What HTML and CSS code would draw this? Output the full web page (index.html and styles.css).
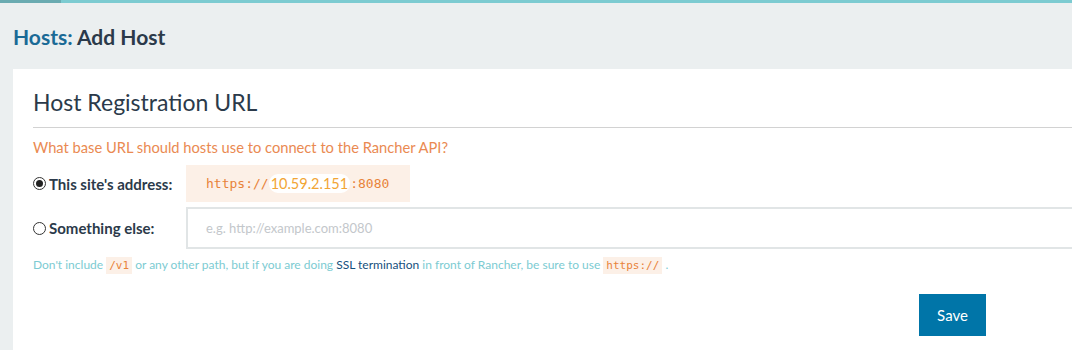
FILE: index.html
```html
<!DOCTYPE html>
<html lang="en">
<head>
    <meta charset="UTF-8">
    <meta name="viewport" content="width=device-width, initial-scale=1.0">
    <title>Hosts: Add Host</title>
    <link rel="stylesheet" href="styles.css">
</head>
<body>
    <div class="top-bar"><span class="top-bar-active"></span></div>

    <div class="page-header">
        <h1><span class="crumb">Hosts:</span> Add Host</h1>
    </div>

    <div class="card">
        <h2>Host Registration URL</h2>
        <hr>

        <p class="question">What base URL should hosts use to connect to the Rancher API?</p>

        <div class="option-row">
            <label class="option">
                <span class="radio checked"></span>
                This site's address:
            </label>
            <div class="site-address">https://<span class="ip">10.59.2.151</span>:8080</div>
        </div>

        <div class="option-row">
            <label class="option">
                <span class="radio"></span>
                Something else:
            </label>
            <input class="url-input" type="text" placeholder="e.g. http://example.com:8080">
        </div>

        <p class="help">Don't include <code>/v1</code> or any other path, but if you are doing <a href="#">SSL termination</a> in front of Rancher, be sure to use <code>https://</code> .</p>

        <div class="footer">
            <button class="save">Save</button>
        </div>
    </div>
</body>
</html>
```

FILE: styles.css
```css
:root {
    --page-bg: #ebeff0;
    --bar-color: #7ccbd1;
    --bar-active: #6aabb1;
    --title-color: #2b3a4a;
    --crumb-color: #1a6a96;
    --orange: #ea8a52;
    --code-bg: #fcf0e7;
    --code-color: #e8833a;
    --help-color: #7ccbd2;
    --link-color: #154f7d;
    --save-color: #0075a8;
}

html, body {
    overflow: hidden;
}

body {
    margin: 0;
    width: 1905px;
    background-color: var(--page-bg);
    font-family: Lato, "Open Sans", sans-serif;
    color: var(--title-color);
}

.top-bar {
    height: 3px;
    background-color: var(--bar-color);
}

.top-bar-active {
    display: block;
    width: 61px;
    height: 3px;
    background-color: var(--bar-active);
}

.page-header {
    height: 66px;
    box-sizing: border-box;
    padding: 21px 13px 0;
}

h1 {
    margin: 0;
    font-size: 21px;
    line-height: 25px;
    font-weight: bold;
    color: var(--title-color);
}

.crumb {
    color: var(--crumb-color);
}

.card {
    margin: 0 13px;
    background-color: white;
    padding: 19px 20px 20px;
    min-height: 300px;
}

h2 {
    margin: 0;
    font-size: 23px;
    line-height: 28px;
    font-weight: normal;
    color: var(--title-color);
}

hr {
    margin: 11px 0 0;
    border: none;
    border-top: 1px solid #d2d2d2;
}

.question {
    margin: 9px 0 0;
    font-size: 14.7px;
    line-height: 20px;
    color: var(--orange);
}

.option-row {
    display: flex;
    align-items: center;
    margin-top: 8px;
}

.option-row + .option-row {
    margin-top: 5px;
}

.option {
    display: flex;
    align-items: center;
    gap: 3px;
    width: 153px;
    flex-shrink: 0;
    font-size: 15px;
    font-weight: bold;
    color: var(--title-color);
}

.radio {
    width: 11px;
    height: 11px;
    border: 1px solid #333;
    border-radius: 50%;
    background-color: white;
    display: flex;
    align-items: center;
    justify-content: center;
}

.radio.checked::after {
    content: "";
    width: 7px;
    height: 7px;
    border-radius: 50%;
    background-color: #222;
}

.site-address {
    width: 224px;
    height: 37px;
    box-sizing: border-box;
    padding: 0 0 0 20px;
    display: flex;
    align-items: center;
    background-color: var(--code-bg);
    font-family: "DejaVu Sans Mono", monospace;
    font-size: 13px;
    color: var(--code-color);
}

.ip {
    background-color: white;
    border-radius: 9px;
    padding: 1px 2px;
    font-family: Lato, sans-serif;
    font-size: 14.5px;
    color: #f2a534;
}

.url-input {
    flex: 1;
    height: 42px;
    box-sizing: border-box;
    border: 2px solid #e1e5e6;
    padding: 0 18px;
    font-family: Lato, sans-serif;
    font-size: 13px;
    outline: none;
}

.url-input::placeholder {
    color: #c3c7cb;
}

.help {
    margin: 7px 0 0;
    font-size: 12px;
    line-height: 18px;
    color: var(--help-color);
}

.help code {
    background-color: var(--code-bg);
    color: var(--code-color);
    font-family: "DejaVu Sans Mono", monospace;
    font-size: 11px;
    padding: 2px 3px;
}

.help a {
    color: var(--link-color);
    text-decoration: none;
}

.footer {
    margin-top: 19px;
    text-align: center;
}

.save {
    width: 67px;
    height: 42px;
    border: none;
    background-color: var(--save-color);
    color: white;
    font-family: Lato, sans-serif;
    font-size: 15px;
    cursor: pointer;
}
```
